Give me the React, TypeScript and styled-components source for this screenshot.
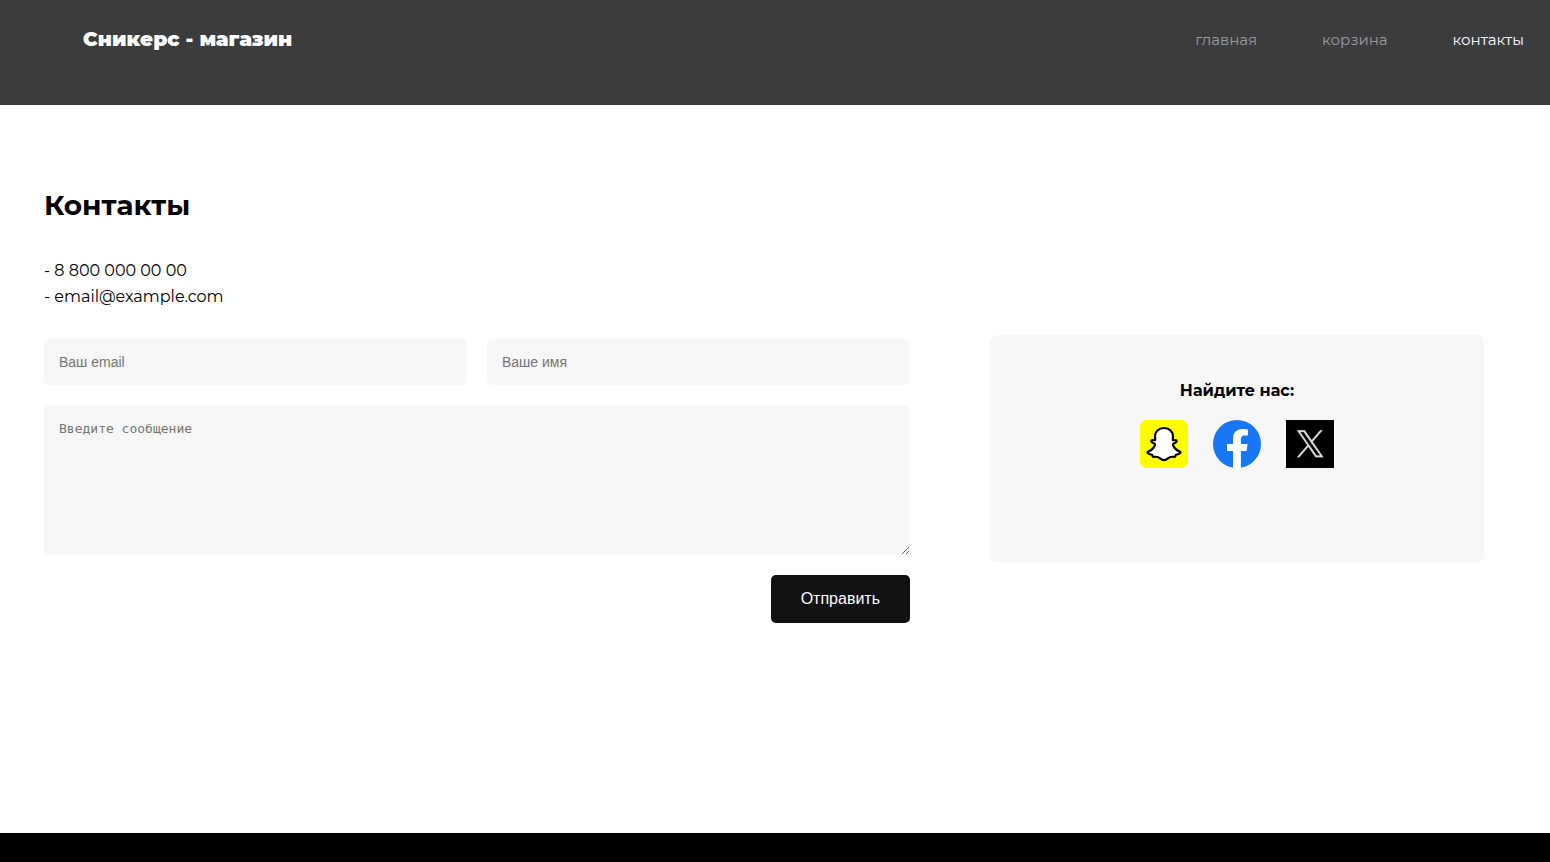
import React from "react";
import styled, { createGlobalStyle } from "styled-components";

const GlobalStyle = createGlobalStyle`
  *, *::before, *::after { box-sizing: border-box; }
  body { margin: 0; background: #fff; color: #000; font-family: Montserrat, Inter, sans-serif; }
`;

const Page = styled.div`
  display: flex;
  flex-direction: column;
  min-height: 100vh;
`;

const Header = styled.header`
  display: flex;
  justify-content: space-between;
  align-items: flex-start;
  flex-wrap: wrap;
  background: #3b3c3e;
  padding: 25px 26px 50px 83px;
`;

const Brand = styled.a`
  color: #fff;
  font-size: 20px;
  line-height: 28px;
  font-weight: 900;
  text-decoration: none;
`;

const Nav = styled.nav`
  display: flex;
  gap: 65px;
`;

const NavLink = styled.a<{ $active?: boolean }>`
  color: ${({ $active }) => ($active ? "#fff" : "#9c9d9e")};
  font-size: 15px;
  line-height: 30px;
  font-weight: 400;
  text-decoration: none;
`;

const Main = styled.main`
  flex: 1;
  padding: 80px 66px 80px 44px;
`;

const Title = styled.h1`
  margin: 0 0 33px;
  font-size: 28px;
  line-height: 40px;
  font-weight: 700;
`;

const ContactList = styled.ul`
  margin: 0;
  padding: 0;
  list-style: none;
  font-size: 16px;
  line-height: 26px;
  font-weight: 400;
`;

const Columns = styled.div`
  display: grid;
  grid-template-columns: minmax(0, 1fr) 494px;
  align-items: start;
  column-gap: 80px;
  margin-top: 25px;
  @media (max-width: 1000px) {
    grid-template-columns: minmax(0, 1fr);
    row-gap: 40px;
  }
`;

const Form = styled.form`
  display: grid;
  grid-template-columns: 1fr 1fr;
  gap: 20px;
  padding-top: 4px;
`;

const TextInput = styled.input`
  width: 100%;
  min-width: 0;
  height: 46px;
  padding: 0 15px;
  border: 0;
  border-radius: 5px;
  background: #f7f7f7;
  font-family: "Liberation Sans", sans-serif;
  font-size: 14px;
  &::placeholder { color: #757575; }
`;

const Message = styled.textarea`
  grid-column: 1 / -1;
  display: block;
  width: 100%;
  height: 150px;
  padding: 15px;
  border: 0;
  border-radius: 5px;
  background: #f7f7f7;
  font-family: "DejaVu Sans Mono", monospace;
  font-size: 13px;
  line-height: 17px;
  resize: both;
  &::placeholder { color: #757575; }
`;

const SubmitButton = styled.button`
  grid-column: 1 / -1;
  justify-self: end;
  height: 48px;
  padding: 0 30px;
  border: 0;
  border-radius: 5px;
  background: #111;
  color: #fff;
  font-family: "Liberation Sans", sans-serif;
  font-size: 16px;
  cursor: pointer;
`;

const SocialCard = styled.aside`
  display: flex;
  flex-direction: column;
  align-items: center;
  gap: 17px;
  min-height: 228px;
  padding: 43px 20px;
  border-radius: 8px;
  background: #f7f7f7;
`;

const SocialTitle = styled.h2`
  margin: 0;
  font-size: 16px;
  line-height: 25px;
  font-weight: 700;
`;

const SocialLinks = styled.div`
  display: flex;
  gap: 25px;
`;

const SocialLink = styled.a`
  display: block;
  width: 48px;
  height: 48px;
  svg { display: block; }
`;

const Footer = styled.footer`
  height: 29px;
  background: #000;
`;

const SnapchatIcon = () => (
  <svg width="48" height="48" viewBox="0 0 48 48" aria-hidden="true">
    <rect width="48" height="48" rx="7" fill="#fffc00" />
    <path
      d="M24 8C18.500 8 15 11.800 15 16.500L15.200 20C14.200 20.600 12.600 19.700 11.500 20.400C10.700 21.400 12 22.500 14.600 23.700C15.700 24.400 14.600 26.300 13.300 28C11.600 30.200 9.600 31.300 7.800 31.900C7 32.900 8.500 34 12 34.800C12.600 35.500 12.200 36.700 13.300 36.900C15.200 36.700 17.200 36.400 19 37.700C20.600 38.900 22 40.200 24 40.200C26 40.200 27.400 38.900 29 37.700C30.800 36.400 32.800 36.700 34.700 36.900C35.800 36.700 35.400 35.500 36 34.800C39.500 34 41 32.900 40.200 31.900C38.400 31.300 36.400 30.200 34.700 28C33.400 26.300 32.300 24.400 33.400 23.700C36 22.500 37.300 21.400 36.500 20.400C35.400 19.700 33.800 20.600 32.800 20L33 16.500C33 11.800 29.500 8 24 8Z"
      fill="#fff"
      stroke="#000"
      strokeWidth="2.200"
      strokeLinejoin="round"
    />
  </svg>
);

const FacebookIcon = () => (
  <svg width="48" height="48" viewBox="0 0 48 48" aria-hidden="true">
    <circle cx="24" cy="24" r="24" fill="#1877f2" />
    <path
      d="M20 47.700V31H14V24H20V18.700C20 12.500 23.700 9 29.400 9C32.200 9 34.900 9.500 34.900 9.500V15.600H31.700C28.700 15.600 27.900 17.500 27.900 19.400V24H34.600L33.500 31H27.900V47.700Q24 48.300 20 47.700Z"
      fill="#fff"
    />
  </svg>
);

const XIcon = () => (
  <svg width="48" height="48" viewBox="0 0 48 48" aria-hidden="true">
    <rect width="48" height="48" fill="#000" />
    <path
      transform="translate(11 10.300) scale(0.0220)"
      d="M714.163 519.284L1160.890 0H1055.030L667.137 450.887L357.328 0H0L468.492 681.821L0 1226.370H105.866L515.491 750.218L842.672 1226.370H1200L714.137 519.284ZM569.165 687.828L521.697 619.934L144.011 79.694H306.615L611.412 515.685L658.880 583.579L1055.080 1150.300H892.476Z"
      fill="#dcdcdc"
      stroke="#dcdcdc"
      strokeWidth="12"
    />
  </svg>
);

export default function App() {
  return (
    <Page>
      <GlobalStyle />
      <Header>
        <Brand href="#">Сникерс - магазин</Brand>
        <Nav>
          <NavLink href="#">главная</NavLink>
          <NavLink href="#">корзина</NavLink>
          <NavLink href="#" $active aria-current="page">контакты</NavLink>
        </Nav>
      </Header>
      <Main>
        <Title>Контакты</Title>
        <ContactList>
          <li>- 8 800 000 00 00</li>
          <li>- email@example.com</li>
        </ContactList>
        <Columns>
          <Form onSubmit={(event) => event.preventDefault()}>
            <TextInput type="email" placeholder="Ваш email" aria-label="Ваш email" />
            <TextInput type="text" placeholder="Ваше имя" aria-label="Ваше имя" />
            <Message placeholder="Введите сообщение" aria-label="Введите сообщение" />
            <SubmitButton type="submit">Отправить</SubmitButton>
          </Form>
          <SocialCard>
            <SocialTitle>Найдите нас:</SocialTitle>
            <SocialLinks>
              <SocialLink href="#" aria-label="Snapchat"><SnapchatIcon /></SocialLink>
              <SocialLink href="#" aria-label="Facebook"><FacebookIcon /></SocialLink>
              <SocialLink href="#" aria-label="X"><XIcon /></SocialLink>
            </SocialLinks>
          </SocialCard>
        </Columns>
      </Main>
      <Footer />
    </Page>
  );
}
